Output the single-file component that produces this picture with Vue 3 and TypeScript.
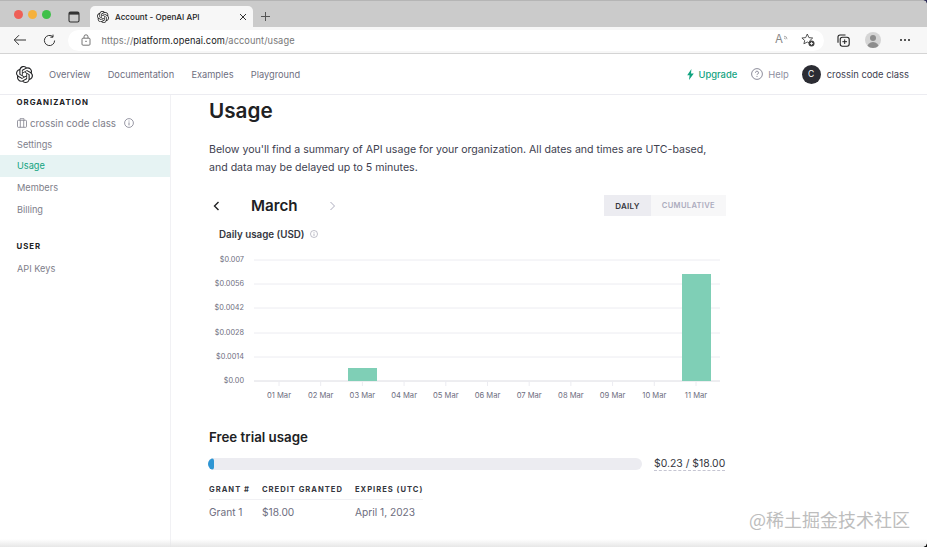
<script setup lang="ts">
const logo = "M22.2819 9.8211a5.9847 5.9847 0 0 0-.5157-4.9108 6.0462 6.0462 0 0 0-6.5098-2.9A6.0651 6.0651 0 0 0 4.9807 4.1818a5.9847 5.9847 0 0 0-3.9977 2.9 6.0462 6.0462 0 0 0 .7427 7.0966 5.98 5.98 0 0 0 .511 4.9107 6.051 6.051 0 0 0 6.5146 2.9001A5.9847 5.9847 0 0 0 13.2599 24a6.0557 6.0557 0 0 0 5.7718-4.2058 5.9894 5.9894 0 0 0 3.9977-2.9001 6.0557 6.0557 0 0 0-.7475-7.0729zm-9.022 12.6081a4.4755 4.4755 0 0 1-2.8764-1.0408l.1419-.0804 4.7783-2.7582a.7948.7948 0 0 0 .3927-.6813v-6.7369l2.02 1.1686a.071.071 0 0 1 .038.052v5.5826a4.504 4.504 0 0 1-4.4945 4.4944zm-9.6607-4.1254a4.4708 4.4708 0 0 1-.5346-3.0137l.142.0852 4.783 2.7582a.7712.7712 0 0 0 .7806 0l5.8428-3.3685v2.3324a.0804.0804 0 0 1-.0332.0615L9.74 19.9502a4.4992 4.4992 0 0 1-6.1408-1.6464zM2.3408 7.8956a4.485 4.485 0 0 1 2.3655-1.9728V11.6a.7664.7664 0 0 0 .3879.6765l5.8144 3.3543-2.0201 1.1685a.0757.0757 0 0 1-.071 0l-4.8303-2.7865A4.504 4.504 0 0 1 2.3408 7.872zm16.5963 3.8558L13.1038 8.364 15.1192 7.2a.0757.0757 0 0 1 .071 0l4.8303 2.7913a4.4944 4.4944 0 0 1-.6765 8.1042v-5.6772a.79.79 0 0 0-.407-.667zm2.0107-3.0231l-.142-.0852-4.7735-2.7818a.7759.7759 0 0 0-.7854 0L9.409 9.2297V6.8974a.0662.0662 0 0 1 .0284-.0615l4.8303-2.7866a4.4992 4.4992 0 0 1 6.6802 4.66zM8.3065 12.863l-2.02-1.1638a.0804.0804 0 0 1-.038-.0567V6.0742a4.4992 4.4992 0 0 1 7.3757-3.4537l-.142.0805L8.704 5.459a.7948.7948 0 0 0-.3927.6813zm1.0976-2.3654l2.602-1.4998 2.6069 1.4998v2.9994l-2.5974 1.4997-2.6067-1.4997Z";

const navItems: string[] = ["Overview", "Documentation", "Examples", "Playground"];
const yTicks = [
  { label: "$0.007", y: 10 },
  { label: "$0.0056", y: 34 },
  { label: "$0.0042", y: 58 },
  { label: "$0.0028", y: 83 },
  { label: "$0.0014", y: 107 },
  { label: "$0.00", y: 131 },
];
const xTicks = ["01 Mar", "02 Mar", "03 Mar", "04 Mar", "05 Mar", "06 Mar", "07 Mar", "08 Mar", "09 Mar", "10 Mar", "11 Mar"];
const xPos = (i: number): number => 70 + i * 41.7;
</script>

<template>
  <div class="window">
    <div class="tabstrip">
      <div class="lights">
        <span class="light red"></span>
        <span class="light yellow"></span>
        <span class="light green"></span>
      </div>
      <svg class="tab-grid" width="12" height="12" viewBox="0 0 12 12">
        <rect x="1" y="1" width="10" height="10" rx="1.5" fill="none" stroke="#333" stroke-width="1.1" />
        <rect x="1" y="1" width="10" height="2.6" fill="#333" />
      </svg>
      <div class="tab">
        <svg class="tab-logo" width="12" height="12" viewBox="0 0 24 24"><path :d="logo" fill="#222" /></svg>
        <span class="tab-title">Account - OpenAI API</span>
        <svg class="tab-close" width="8" height="8" viewBox="0 0 8 8"><path d="M1 1l6 6M7 1L1 7" stroke="#333" stroke-width="1" fill="none" /></svg>
      </div>
      <svg class="tab-plus" width="11" height="11" viewBox="0 0 11 11"><path d="M5.5 1v9M1 5.5h9" stroke="#555" stroke-width="1" fill="none" /></svg>
    </div>

    <div class="toolbar">
      <svg class="back" width="14" height="12" viewBox="0 0 14 12"><path d="M13 6H1.5M6 1.2L1.2 6 6 10.8" stroke="#333" stroke-width="1" fill="none" /></svg>
      <svg class="reload" width="13" height="13" viewBox="0 0 13 13"><path d="M11.6 6.5A5.1 5.1 0 1 1 9.9 2.7M10 .6v2.6H7.4" stroke="#333" stroke-width="1" fill="none" /></svg>
      <div class="omnibox">
        <svg class="lock" width="10" height="12" viewBox="0 0 10 12"><rect x="1" y="4.2" width="8" height="7" rx="1" fill="none" stroke="#666" stroke-width=".9" /><path d="M3 4V2.8a2 2 0 0 1 4 0V4" fill="none" stroke="#666" stroke-width=".9" /><rect x="4.4" y="6.8" width="1.2" height="1.2" fill="#666" /></svg>
        <span class="url"><span class="dim">https://</span>platform.openai.com<span class="dim">/account/usage</span></span>
        <span class="omni-spacer"></span>
        <span class="read-aloud">A</span>
        <svg class="read-arcs" width="5" height="6" viewBox="0 0 5 6"><path d="M1 1.2a3 3 0 0 1 3 3M1 3a1.4 1.4 0 0 1 1.4 1.3" fill="none" stroke="#888" stroke-width=".7" /></svg>
        <svg class="fav" width="14" height="14" viewBox="0 0 14 14"><path d="M6.3 1l1.6 3.6 3.8.4-2.8 2.6.7 3.1L6.3 9l-3.4 1.8.8-3.3L.9 5l3.8-.4z" fill="none" stroke="#444" stroke-width=".9" /><circle cx="10.5" cy="10.5" r="3" fill="#444" /><path d="M10.5 9v3M9 10.5h3" stroke="#fff" stroke-width=".8" /></svg>
      </div>
      <svg class="collect" width="13" height="13" viewBox="0 0 13 13"><rect x="3.2" y="3.2" width="9" height="9" rx="2.2" fill="none" stroke="#222" stroke-width="1.1" /><path d="M1 8.8V3a2 2 0 0 1 2-2h5.5" fill="none" stroke="#222" stroke-width="1.1" /><path d="M7.7 5.4v4.6M5.4 7.7H10" stroke="#222" stroke-width="1" /></svg>
      <div class="profile">
        <span class="profile-head"></span>
        <span class="profile-body"></span>
      </div>
      <div class="more"><i></i><i></i><i></i></div>
    </div>

    <header class="appnav">
      <svg class="app-logo" width="17" height="17" viewBox="0 0 24 24"><path :d="logo" fill="#202123" /></svg>
      <nav class="links">
        <a v-for="n in navItems" :key="n" class="link">{{ n }}</a>
      </nav>
      <span class="nav-spacer"></span>
      <a class="upgrade">
        <svg width="7" height="11" viewBox="0 0 7 11"><path d="M4.4 0L.2 6.2h2.4L2 11l4.8-6.6H4z" fill="#10a37f" /></svg>
        Upgrade
      </a>
      <a class="help">
        <svg width="12" height="12" viewBox="0 0 12 12"><circle cx="6" cy="6" r="5.4" fill="none" stroke="#6e6e80" stroke-width=".8" /><path d="M4.5 4.7a1.5 1.5 0 1 1 2.2 1.3c-.5.3-.7.6-.7 1.1" fill="none" stroke="#6e6e80" stroke-width=".8" /><circle cx="6" cy="8.6" r=".5" fill="#6e6e80" /></svg>
        Help
      </a>
      <div class="account">
        <span class="avatar">C</span>
        <span class="account-name">crossin code class</span>
      </div>
    </header>

    <div class="body">
      <aside class="sidebar">
        <div class="side-head first">ORGANIZATION</div>
        <div class="org-row">
          <svg width="10" height="10" viewBox="0 0 10 10"><rect x=".5" y="2.3" width="9" height="7" rx=".8" fill="none" stroke="#7e7e8a" stroke-width=".8" /><path d="M3 2.3V.7h4v1.6M3.3 2.3v7M6.7 2.3v7" fill="none" stroke="#7e7e8a" stroke-width=".8" /></svg>
          <span>crossin code class</span>
          <svg class="org-info" width="10" height="10" viewBox="0 0 10 10"><circle cx="5" cy="5" r="4.4" fill="none" stroke="#6e6e80" stroke-width=".7" /><path d="M5 4.4v3M5 2.6v.9" stroke="#6e6e80" stroke-width=".8" /></svg>
        </div>
        <a class="side-link">Settings</a>
        <a class="side-link active">Usage</a>
        <a class="side-link">Members</a>
        <a class="side-link">Billing</a>
        <div class="side-head second">USER</div>
        <a class="side-link">API Keys</a>
      </aside>

      <main class="main">
        <h1 class="title">Usage</h1>
        <p class="intro">Below you'll find a summary of API usage for your organization. All dates and times are UTC-based, and data may be delayed up to 5 minutes.</p>

        <div class="month-row">
          <svg class="chev" width="7" height="10" viewBox="0 0 7 10"><path d="M5.5 1L1.5 5l4 4" fill="none" stroke="#202123" stroke-width="1.4" /></svg>
          <span class="month">March</span>
          <svg class="chev-next" width="7" height="10" viewBox="0 0 7 10"><path d="M1.5 1l4 4-4 4" fill="none" stroke="#acacbe" stroke-width="1" /></svg>
          <span class="month-spacer"></span>
          <div class="segment">
            <span class="seg on">DAILY</span>
            <span class="seg">CUMULATIVE</span>
          </div>
        </div>

        <div class="chart-title">
          Daily usage (USD)
          <svg width="8" height="8" viewBox="0 0 10 10"><circle cx="5" cy="5" r="4.4" fill="none" stroke="#8e8ea0" stroke-width=".7" /><path d="M5 4.4v3M5 2.6v.9" stroke="#8e8ea0" stroke-width=".8" /></svg>
        </div>

        <svg class="chart" width="520" height="160" viewBox="0 0 520 160">
          <g v-for="t in yTicks" :key="t.label">
            <line x1="45" x2="511" :y1="t.y" :y2="t.y" :stroke="t.y === 131 ? '#dcdce2' : '#ececf1'" stroke-width="1" />
            <text x="35" :y="t.y + 2" text-anchor="end" class="axis y">{{ t.label }}</text>
          </g>
          <g v-for="(t, i) in xTicks" :key="t">
            <line :x1="xPos(i)" :x2="xPos(i)" y1="131" y2="136" stroke="#ececf1" />
            <text :x="xPos(i)" y="148" text-anchor="middle" class="axis">{{ t }}</text>
          </g>
          <rect x="139" y="118" width="29" height="13" fill="#7fcfb6" />
          <rect x="473" y="24" width="29" height="107" fill="#7fcfb6" />
        </svg>

        <h2 class="trial-title">Free trial usage</h2>
        <div class="trial-row">
          <div class="track"><div class="fill" :style="{ width: '1.4%' }"></div></div>
          <span class="trial-value">$0.23 / $18.00</span>
        </div>

        <table class="grants">
          <thead>
            <tr><th>GRANT #</th><th>CREDIT GRANTED</th><th>EXPIRES (UTC)</th></tr>
          </thead>
          <tbody>
            <tr><td>Grant 1</td><td>$18.00</td><td>April 1, 2023</td></tr>
          </tbody>
        </table>
      </main>
    </div>

    <div class="bottom-fade"></div>
    <span class="watermark">@稀土掘金技术社区</span>
    <span class="corner tr"></span>
    <span class="corner br"></span>
  </div>
</template>

<style scoped>
.window {
  position: relative;
  width: 927px;
  height: 547px;
  overflow: hidden;
  background: #fff;
  display: flex;
  flex-direction: column;
  font-family: Inter, "Noto Sans", sans-serif;
  color: #353740;
}
.tabstrip {
  height: 27px;
  flex: none;
  background: #cbcbcb;
  display: flex;
  align-items: flex-end;
  box-sizing: border-box;
  border-top: 1px solid #b5b5b5;
}
.lights {
  display: flex;
  gap: 5px;
  padding-left: 14px;
  align-self: flex-start;
  margin-top: 9px;
}
.light { width: 9px; height: 9px; border-radius: 50%; }
.red { background: #ee5f57; }
.yellow { background: #f5b13d; }
.green { background: #3fc04a; }
.tab-grid { margin-left: 17px; align-self: flex-start; margin-top: 10px; }
.tab {
  margin-left: 10px;
  width: 163px;
  height: 21px;
  background: #f7f7f7;
  border-radius: 5px 5px 0 0;
  display: flex;
  align-items: center;
  box-sizing: border-box;
  padding: 0 6px 0 7px;
}
.tab-logo { flex: none; }
.tab-title { margin-left: 6px; font-size: 8.1px; color: #222; font-weight: 500; white-space: nowrap; }
.tab-close { margin-left: auto; margin-top: 1px; }
.tab-plus { margin-left: 7px; margin-bottom: 5px; }
.toolbar {
  height: 27px;
  flex: none;
  background: #f7f7f7;
  border-bottom: 1px solid #d4d4d4;
  box-sizing: border-box;
  display: flex;
  align-items: center;
}
.back { margin-left: 13px; }
.reload { margin-left: 16px; }
.omnibox {
  margin-left: 12px;
  width: 756px;
  height: 21px;
  background: #fff;
  border-radius: 11px;
  display: flex;
  align-items: center;
  box-sizing: border-box;
  padding: 0 9px 0 13px;
}
.url { margin-left: 10.5px; font-size: 9.25px; color: #202123; white-space: nowrap; letter-spacing: .08px; }
.dim { color: #777; }
.omni-spacer { flex: 1; }
.read-aloud { font-size: 11.5px; color: #888; line-height: 1; }
.read-arcs { margin-bottom: 5px; }
.fav { margin-left: 13px; }
.collect { margin-left: 13px; }
.profile {
  margin-left: 15px;
  width: 16px;
  height: 16px;
  border-radius: 50%;
  background: #d5d5d5;
  position: relative;
  overflow: hidden;
  flex: none;
}
.profile-head { position: absolute; left: 5px; top: 3px; width: 6px; height: 6px; border-radius: 50%; background: #8d8d8d; }
.profile-body { position: absolute; left: 2px; top: 10px; width: 12px; height: 8px; border-radius: 6px 6px 0 0; background: #8d8d8d; }
.more { margin-left: 19px; display: flex; gap: 2px; }
.more i { width: 2px; height: 2px; border-radius: 50%; background: #222; display: block; }
.appnav {
  height: 41px;
  flex: none;
  display: flex;
  align-items: center;
  border-bottom: 1px solid #ececf1;
  box-sizing: border-box;
  padding: 0 18px 0 16px;
}
.links { display: flex; gap: 17.3px; margin-left: 16px; }
.link { font-size: 9.25px; color: #6e6e80; white-space: nowrap; }
.nav-spacer { flex: 1; }
.upgrade {
  display: flex;
  align-items: center;
  gap: 4px;
  font-size: 9.4px;
  color: #10a37f;
  font-weight: 500;
}
.help {
  display: flex;
  align-items: center;
  gap: 5px;
  margin-left: 14px;
  font-size: 9.4px;
  color: #8e8ea0;
}
.account { display: flex; align-items: center; margin-left: 13px; }
.avatar {
  width: 19px;
  height: 19px;
  border-radius: 50%;
  background: #2b2c33;
  color: #fff;
  font-size: 8.5px;
  display: flex;
  align-items: center;
  justify-content: center;
}
.account-name { margin-left: 6px; font-size: 9.4px; color: #40414f; white-space: nowrap; }
.body { flex: 1; min-height: 0; display: flex; }
.sidebar {
  width: 171px;
  flex: none;
  box-sizing: border-box;
  border-right: 1px solid #f1f1f4;
  display: flex;
  flex-direction: column;
  font-size: 9.2px;
}
.side-head {
  font-size: 7.8px;
  font-weight: 700;
  letter-spacing: 1px;
  color: #202123;
  padding-left: 16.5px;
  line-height: 12px;
}
.side-head.first { margin-top: 1px; }
.side-head.second { margin-top: 20px; margin-bottom: 6px; }
.org-row {
  display: flex;
  align-items: center;
  gap: 3px;
  padding-left: 17px;
  height: 20.6px;
  margin-top: 5px;
  color: #7e7e8a;
  font-size: 9.8px;
}
.org-info { margin-left: 5px; }
.side-link {
  display: block;
  height: 21.7px;
  line-height: 21px;
  padding-left: 17px;
  color: #7e7e8a;
}
.side-link.active { background: #e6f3f3; color: #10a37f; }
.main { flex: 1; padding-left: 38px; min-width: 0; display: flex; flex-direction: column; align-items: flex-start; }
.title { margin: 3px 0 0; font-size: 20.7px; line-height: 26px; font-weight: 600; color: #202123; }
.intro {
  margin: 17px 0 0;
  width: 510px;
  font-size: 10.58px;
  line-height: 18px;
  color: #40414f;
}
.month-row { margin-top: 18px; width: 517px; height: 21px; display: flex; align-items: center; }
.chev { margin-left: 4px; }
.month { margin-left: 31px; font-size: 15.2px; font-weight: 600; color: #202123; }
.chev-next { margin-left: 31px; }
.month-spacer { flex: 1; }
.segment { display: flex; height: 21px; }
.seg {
  font-size: 7.6px;
  font-weight: 600;
  letter-spacing: .3px;
  display: flex;
  align-items: center;
  padding: 0 11px;
  background: #f7f7f8;
  color: #acacbe;
}
.seg.on { background: #ececf1; color: #353740; font-size: 8px; }
.chart-title {
  margin: 12px 0 0 10px;
  height: 12px;
  display: flex;
  align-items: center;
  gap: 5px;
  font-size: 9.8px;
  font-weight: 600;
  color: #353740;
}
.chart { margin-top: 10px; margin-left: 0; flex: none; display: block; }
.axis { font-size: 7.6px; fill: #6e6e80; font-family: Inter, sans-serif; }
.axis.y { font-size: 7.3px; }
.trial-title { margin: 19px 0 0; font-size: 13.3px; line-height: 16px; font-weight: 600; color: #202123; }
.trial-row { margin-top: 12px; width: 517px; display: flex; align-items: center; }
.track { width: 434px; margin-left: -1px; height: 12px; border-radius: 6px; background: #ececf1; overflow: hidden; }
.fill { height: 100%; background: #2e95d3; border-radius: 6px; }
.trial-value {
  margin-left: 12px;
  font-size: 10.4px;
  color: #353740;
  border-bottom: 1px dashed #c5c5d2;
  white-space: nowrap;
}
.grants { margin-top: 14px; border-collapse: collapse; }
.grants th {
  text-align: left;
  font-size: 7.6px;
  font-weight: 700;
  letter-spacing: 1px;
  color: #353740;
  padding: 0 12px 5px 0;
  border-bottom: 1px solid #f1f1f4;
  white-space: nowrap;
}
.grants th:last-child, .grants td:last-child { padding-right: 0; }
.grants td {
  font-size: 10.2px;
  color: #6e6e80;
  padding: 6px 12px 0 0;
  white-space: nowrap;
}
.bottom-fade {
  position: absolute;
  left: 0;
  right: 0;
  bottom: 0;
  height: 8px;
  background: linear-gradient(to bottom, rgba(240, 240, 240, 0), rgba(228, 228, 228, .9));
  pointer-events: none;
}
.watermark {
  position: absolute;
  right: 17px;
  bottom: 16px;
  font-family: "Noto Sans CJK SC", sans-serif;
  font-size: 18px;
  line-height: 24px;
  color: #bdbdbd;
  white-space: nowrap;
}
.corner { position: absolute; right: 0; width: 4px; height: 4px; }
.corner.tr { top: 0; background: radial-gradient(circle at 0 100%, transparent 3.5px, #2f2f5a 4px); }
.corner.br { bottom: 0; background: radial-gradient(circle at 0 0, transparent 3.5px, #111 4px); }
</style>
